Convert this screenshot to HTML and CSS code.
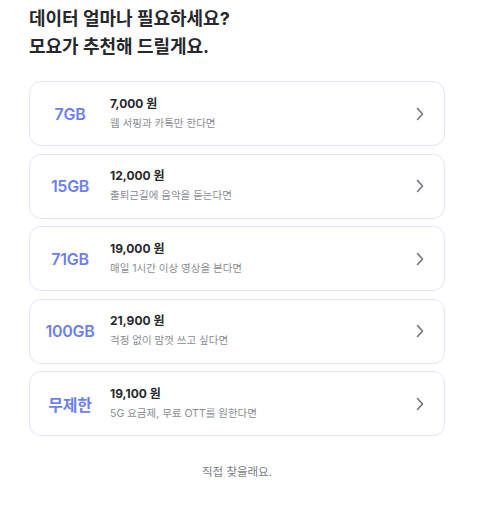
FILE: index.html
```html
<!DOCTYPE html>
<html lang="ko">
<head>
<meta charset="utf-8">
<link rel="stylesheet" href="styles.css">
</head>
<body>
<main class="page">
  <h1 class="title">데이터 얼마나 필요하세요?<br>모요가 추천해 드릴게요.</h1>
  <ul class="plans">
    <li class="plan">
      <span class="plan-size">7GB</span>
      <div class="plan-info">
        <div class="plan-price">7,000 원</div>
        <div class="plan-desc">웹 서핑과 카톡만 한다면</div>
      </div>
      <svg class="chev" width="10" height="14" viewBox="0 0 10 14"><path d="M2.5 1.5 L7.5 7 L2.5 12.5" fill="none" stroke="#6f7480" stroke-width="1.6" stroke-linecap="round" stroke-linejoin="round"/></svg>
    </li>
    <li class="plan">
      <span class="plan-size">15GB</span>
      <div class="plan-info">
        <div class="plan-price">12,000 원</div>
        <div class="plan-desc">출퇴근길에 음악을 듣는다면</div>
      </div>
      <svg class="chev" width="10" height="14" viewBox="0 0 10 14"><path d="M2.5 1.5 L7.5 7 L2.5 12.5" fill="none" stroke="#6f7480" stroke-width="1.6" stroke-linecap="round" stroke-linejoin="round"/></svg>
    </li>
    <li class="plan">
      <span class="plan-size">71GB</span>
      <div class="plan-info">
        <div class="plan-price">19,000 원</div>
        <div class="plan-desc">매일 1시간 이상 영상을 본다면</div>
      </div>
      <svg class="chev" width="10" height="14" viewBox="0 0 10 14"><path d="M2.5 1.5 L7.5 7 L2.5 12.5" fill="none" stroke="#6f7480" stroke-width="1.6" stroke-linecap="round" stroke-linejoin="round"/></svg>
    </li>
    <li class="plan">
      <span class="plan-size">100GB</span>
      <div class="plan-info">
        <div class="plan-price">21,900 원</div>
        <div class="plan-desc">걱정 없이 맘껏 쓰고 싶다면</div>
      </div>
      <svg class="chev" width="10" height="14" viewBox="0 0 10 14"><path d="M2.5 1.5 L7.5 7 L2.5 12.5" fill="none" stroke="#6f7480" stroke-width="1.6" stroke-linecap="round" stroke-linejoin="round"/></svg>
    </li>
    <li class="plan">
      <span class="plan-size">무제한</span>
      <div class="plan-info">
        <div class="plan-price">19,100 원</div>
        <div class="plan-desc">5G 요금제, 무료 OTT를 원한다면</div>
      </div>
      <svg class="chev" width="10" height="14" viewBox="0 0 10 14"><path d="M2.5 1.5 L7.5 7 L2.5 12.5" fill="none" stroke="#6f7480" stroke-width="1.6" stroke-linecap="round" stroke-linejoin="round"/></svg>
    </li>
  </ul>
  <p class="self">직접 찾을래요.</p>
</main>
</body>
</html>
```
FILE: styles.css
```css
* { box-sizing: border-box; }
html, body { margin: 0; padding: 0; background: #fff; }
body {
  font-family: Inter, "Noto Sans CJK KR", "Noto Sans", sans-serif;
  color: #26282c;
}
.page {
  width: 483px;
  padding: 5px 38px 0 29px;
}
.title {
  margin: 0;
  font-size: 18px;
  line-height: 28px;
  font-weight: 700;
  color: #26282c;
  letter-spacing: 0;
}
.plans {
  list-style: none;
  margin: 20px 0 0;
  padding: 0;
  display: flex;
  flex-direction: column;
  gap: 7.25px;
}
.plan {
  height: 65.25px;
  border: 1px solid #e1e4fb;
  border-radius: 12px;
  display: flex;
  align-items: center;
  padding-right: 19px;
}
.plan-size {
  width: 80px;
  text-align: center;
  font-size: 16px;
  font-weight: 600;
  color: #6d7ff0;
  letter-spacing: -0.3px;
}
.plan-info {
  flex: 1;
  display: flex;
  flex-direction: column;
  gap: 2px;
}
.plan-price {
  font-size: 12px;
  line-height: 18px;
  font-weight: 700;
  color: #26282c;
}
.plan-desc {
  font-size: 10.5px;
  line-height: 18px;
  color: #8a8d94;
}
.chev { display: block; }
.self {
  margin: 27px 0 0;
  text-align: center;
  font-size: 11.5px;
  line-height: 18px;
  color: #7a7d85;
}
```
